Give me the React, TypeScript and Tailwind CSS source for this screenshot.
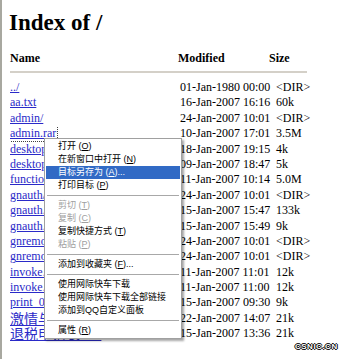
import React from 'react';

type Row = { name: string; date: string; size: string; cjk?: boolean; focus?: boolean };

const rows: Row[] = [
  { name: '../', date: '01-Jan-1980 00:00', size: '<DIR>' },
  { name: 'aa.txt', date: '16-Jan-2007 16:16', size: '60k' },
  { name: 'admin/', date: '24-Jan-2007 10:01', size: '<DIR>' },
  { name: 'admin.rar', date: '10-Jan-2007 17:01', size: '3.5M', focus: true },
  { name: 'desktop_bg.jpg', date: '18-Jan-2007 19:15', size: '4k' },
  { name: 'desktop_ico.gif', date: '09-Jan-2007 18:47', size: '5k' },
  { name: 'function.zip', date: '11-Jan-2007 10:14', size: '5.0M' },
  { name: 'gnauth/', date: '24-Jan-2007 10:01', size: '<DIR>' },
  { name: 'gnauth.c', date: '15-Jan-2007 15:47', size: '133k' },
  { name: 'gnauth.bak', date: '15-Jan-2007 15:49', size: '9k' },
  { name: 'gnremote/', date: '24-Jan-2007 10:01', size: '<DIR>' },
  { name: 'gnremoteadm/', date: '24-Jan-2007 10:01', size: '<DIR>' },
  { name: 'invoke.c', date: '11-Jan-2007 11:01', size: '12k' },
  { name: 'invoke.h', date: '11-Jan-2007 11:00', size: '12k' },
  { name: 'print_01.txt', date: '15-Jan-2007 09:30', size: '9k' },
  { name: '激情与梦想.doc', date: '22-Jan-2007 14:07', size: '21k', cjk: true },
  { name: '退税申请表.xls', date: '15-Jan-2007 13:36', size: '21k', cjk: true },
];

type Item = { label: string; key?: string; tail?: string; disabled?: boolean; active?: boolean } | 'sep';

const menu: Item[] = [
  { label: '打开', key: 'O' },
  { label: '在新窗口中打开', key: 'N' },
  { label: '目标另存为', key: 'A', tail: '...', active: true },
  { label: '打印目标', key: 'P' },
  'sep',
  { label: '剪切', key: 'T', disabled: true },
  { label: '复制', key: 'C', disabled: true },
  { label: '复制快捷方式', key: 'T' },
  { label: '粘贴', key: 'P', disabled: true },
  'sep',
  { label: '添加到收藏夹', key: 'F', tail: '...' },
  'sep',
  { label: '使用网际快车下载' },
  { label: '使用网际快车下载全部链接' },
  { label: '添加到QQ自定义面板' },
  'sep',
  { label: '属性', key: 'R' },
];

const serif = "font-['Liberation_Serif','Times_New_Roman',serif]";

export default function App() {
  return (
    <div className={`relative w-[350px] h-[359px] overflow-hidden bg-white border-l-2 border-[#a8a8a0] pl-[8px] text-black ${serif}`}>
      <h1 className="-ml-[1px] pt-[9px] text-[23px] leading-[28px] font-bold">Index of /</h1>

      {/* header */}
      <div className="mt-[14px] flex h-[15px] text-[12px] leading-[15px] font-bold">
        <span className="w-[168px]">Name</span>
        <span className="w-[91px]">Modified</span>
        <span>Size</span>
      </div>
      <div className="mt-[5px] h-[2px] w-[297px] bg-[#d4d0c8]"></div>

      {/* listing */}
      <div className="mt-[7px]">
        {rows.map((r, i) => (
          <div key={i} className="flex h-[15.4px] text-[12px] leading-[15.4px] whitespace-nowrap">
            <span className="w-[170px] overflow-hidden">
              <a
                className={`text-[#2a2ac8] underline ${
                  r.cjk ? "text-[14px] font-['Noto_Sans_CJK_SC',sans-serif] leading-[15px]" : ''
                } ${r.focus ? 'outline-1 outline-dotted outline-[#404040] outline-offset-[1px]' : ''}`}
              >
                {r.name}
              </a>
            </span>
            <span className="w-[96px]">{r.date}</span>
            <span>{r.size}</span>
          </div>
        ))}
      </div>

      {/* context menu */}
      <div className="absolute left-[42px] top-[138px] w-[138px] bg-white border border-[#a0a0a0] py-[1px] px-[1px] shadow-[2px_2px_2px_rgba(0,0,0,0.35)] font-['Liberation_Sans','Noto_Sans_CJK_SC',sans-serif] text-[9px]">
        {menu.map((m, i) =>
          m === 'sep' ? (
            <div key={i} className="h-[7px] flex items-center px-[1px]">
              <div className="h-px w-full bg-[#a8a8a8]"></div>
            </div>
          ) : (
            <div
              key={i}
              className={`h-[13px] leading-[13px] pl-[12px] whitespace-nowrap ${
                m.active ? 'bg-[#316ac5] text-white' : m.disabled ? 'text-[#a0a0a0]' : 'text-black'
              }`}
            >
              {m.label}
              {m.key && (
                <span>
                  {' '}(<span className="underline">{m.key}</span>)
                </span>
              )}
              {m.tail}
            </div>
          )
        )}
      </div>

      {/* watermark */}
      <div className="absolute left-[293px] top-[342px] text-[8px] leading-[10px] font-bold tracking-[0.5px] text-white font-['Liberation_Sans',sans-serif] [text-shadow:1px_0_0_#000,-1px_0_0_#000,0_1px_0_#000,0_-1px_0_#000]">
        CSNIC.CN
      </div>
    </div>
  );
}
